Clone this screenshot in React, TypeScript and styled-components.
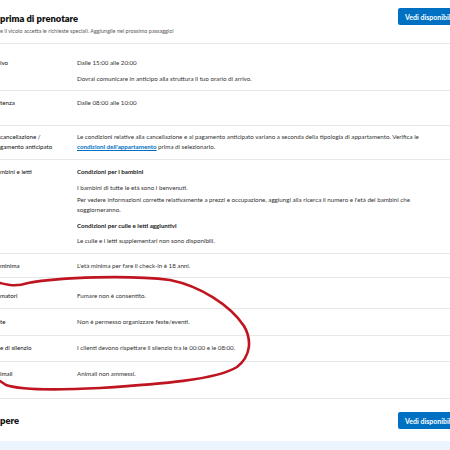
import React from "react";
import styled, { createGlobalStyle } from "styled-components";

const Global = createGlobalStyle`
  html, body { margin: 0; padding: 0; background: #fff; }
  body { font-family: Lato, "Open Sans", sans-serif; overflow: hidden; }
  * { box-sizing: border-box; }
`;

const Page = styled.div`
  position: relative;
  width: 450px;
  height: 450px;
  overflow: hidden;
  background: #fff;
  display: flex;
  flex-direction: column;
`;

const Header = styled.div`
  display: flex;
  justify-content: space-between;
  align-items: flex-start;
  padding-top: 8px;
  height: 43px;
`;

const TitleBlock = styled.div`
  display: flex;
  flex-direction: column;
  padding-top: 5px;
`;

const Title = styled.h2`
  margin: 0;
  font-size: 9.4px;
  line-height: 11px;
  font-weight: 800;
  color: #111;
  white-space: nowrap;
`;

const Subtitle = styled.p`
  margin: 3px 0 0;
  font-size: 5.5px;
  line-height: 8px;
  color: #595959;
  white-space: nowrap;
`;

const Button = styled.button`
  flex: none;
  width: 52px;
  height: 17px;
  border: none;
  border-radius: 2px 0 0 2px;
  background: #0071c2;
  color: #fff;
  font-family: inherit;
  font-weight: 700;
  font-size: 7px;
  text-align: left;
  padding: 0 0 0 7px;
  white-space: nowrap;
  overflow: hidden;
`;

const Table = styled.div`
  border-top: 1px solid #e8e8e8;
  border-bottom: 1px solid #e8e8e8;
`;

const Row = styled.div<{ $pt: number; $pb: number }>`
  display: grid;
  grid-template-columns: 77px 358px;
  padding: ${(p) => p.$pt}px 0 ${(p) => p.$pb}px;
  & + & { border-top: 1px solid #e8e8e8; }
`;

const Label = styled.div`
  font-size: 6.2px;
  line-height: 10px;
  color: #111;
  white-space: pre-line;
`;

const Value = styled.div`
  font-size: 6.2px;
  line-height: 10px;
  color: #333;
`;

const Para = styled.p<{ $mt?: number }>`
  margin: ${(p) => p.$mt ?? 0}px 0 0;
`;

const SubHead = styled.p<{ $mt?: number }>`
  margin: ${(p) => p.$mt ?? 0}px 0 0;
  font-weight: 700;
  color: #1a1a1a;
`;

const Link = styled.a`
  color: #0071c2;
  font-weight: 700;
  text-decoration: underline;
`;

const Footer = styled.div`
  display: flex;
  justify-content: space-between;
  align-items: center;
  padding: 13px 0 12px;
`;

const FooterTitle = styled.h2`
  margin: 0;
  font-size: 9.4px;
  line-height: 12px;
  font-weight: 800;
  color: #111;
`;

const Band = styled.div`
  flex: 1;
  background: #ebf3ff;
`;

const Scribble = styled.svg`
  position: absolute;
  left: 0;
  top: 0;
  pointer-events: none;
`;

type RowData = {
  label: string;
  pt: number;
  pb: number;
  content: React.ReactNode;
};

const rows: RowData[] = [
  {
    label: "ivo",
    pt: 14,
    pb: 6,
    content: (
      <>
        <Para>Dalle 15:00 alle 20:00</Para>
        <Para $mt={6}>Dovrai comunicare in anticipo alla struttura il tuo orario di arrivo.</Para>
      </>
    ),
  },
  { label: "tenza", pt: 7, pb: 17, content: <Para>Dalle 08:00 alle 10:00</Para> },
  {
    label: "cancellazione /\ngamento anticipato",
    pt: 6,
    pb: 7,
    content: (
      <Para>
        Le condizioni relative alla cancellazione e al pagamento anticipato variano a seconda della
        tipologia di appartamento. Verifica le <Link>condizioni dell'appartamento</Link> prima di
        selezionarlo.
      </Para>
    ),
  },
  {
    label: "mbini e letti",
    pt: 7,
    pb: 7,
    content: (
      <>
        <SubHead>Condizioni per i bambini</SubHead>
        <Para $mt={6}>I bambini di tutte le età sono i benvenuti.</Para>
        <Para $mt={2}>
          Per vedere informazioni corrette relativamente a prezzi e occupazione, aggiungi alla ricerca il
          numero e l'età dei bambini che soggiorneranno.
        </Para>
        <SubHead $mt={6}>Condizioni per culle e letti aggiuntivi</SubHead>
        <Para $mt={5}>Le culle e i letti supplementari non sono disponibili.</Para>
      </>
    ),
  },
  { label: " minima", pt: 7, pb: 6, content: <Para>L'età minima per fare il check-in è 18 anni.</Para> },
  { label: "matori", pt: 13, pb: 7, content: <Para>Fumare non è consentito.</Para> },
  { label: "te", pt: 8, pb: 8, content: <Para>Non è permesso organizzare feste/eventi.</Para> },
  {
    label: "e di silenzio",
    pt: 7,
    pb: 8,
    content: <Para>I clienti devono rispettare il silenzio tra le 00:00 e le 08:00.</Para>,
  },
  { label: "imali", pt: 7, pb: 19, content: <Para>Animali non ammessi.</Para> },
];

export default function App() {
  return (
    <>
      <Global />
      <Page>
        <Header>
          <TitleBlock>
            <Title>prima di prenotare</Title>
            <Subtitle>e il vicolo accetta le richieste speciali. Aggiungile nel prossimo passaggio!</Subtitle>
          </TitleBlock>
          <Button>Vedi disponibilità</Button>
        </Header>
        <Table>
          {rows.map((r, i) => (
            <Row key={i} $pt={r.pt} $pb={r.pb}>
              <Label>{r.label}</Label>
              <Value>{r.content}</Value>
            </Row>
          ))}
        </Table>
        <Footer>
          <FooterTitle>pere</FooterTitle>
          <Button>Vedi disponibilità</Button>
        </Footer>
        <Band />
        <Scribble width="450" height="450" viewBox="0 0 450 450">
          <path
            d="M0,283 C8,285 16,287 28,283 C60,277 130,275 170,280 C200,286 230,305 244,326 C252,340 251,356 237,367 C216,380 160,384 100,388 C60,390 20,390 6,385 L0,381"
            fill="none"
            stroke="#bf1520"
            strokeWidth="2.6"
            strokeLinecap="round"
            strokeLinejoin="round"
          />
        </Scribble>
      </Page>
    </>
  );
}
